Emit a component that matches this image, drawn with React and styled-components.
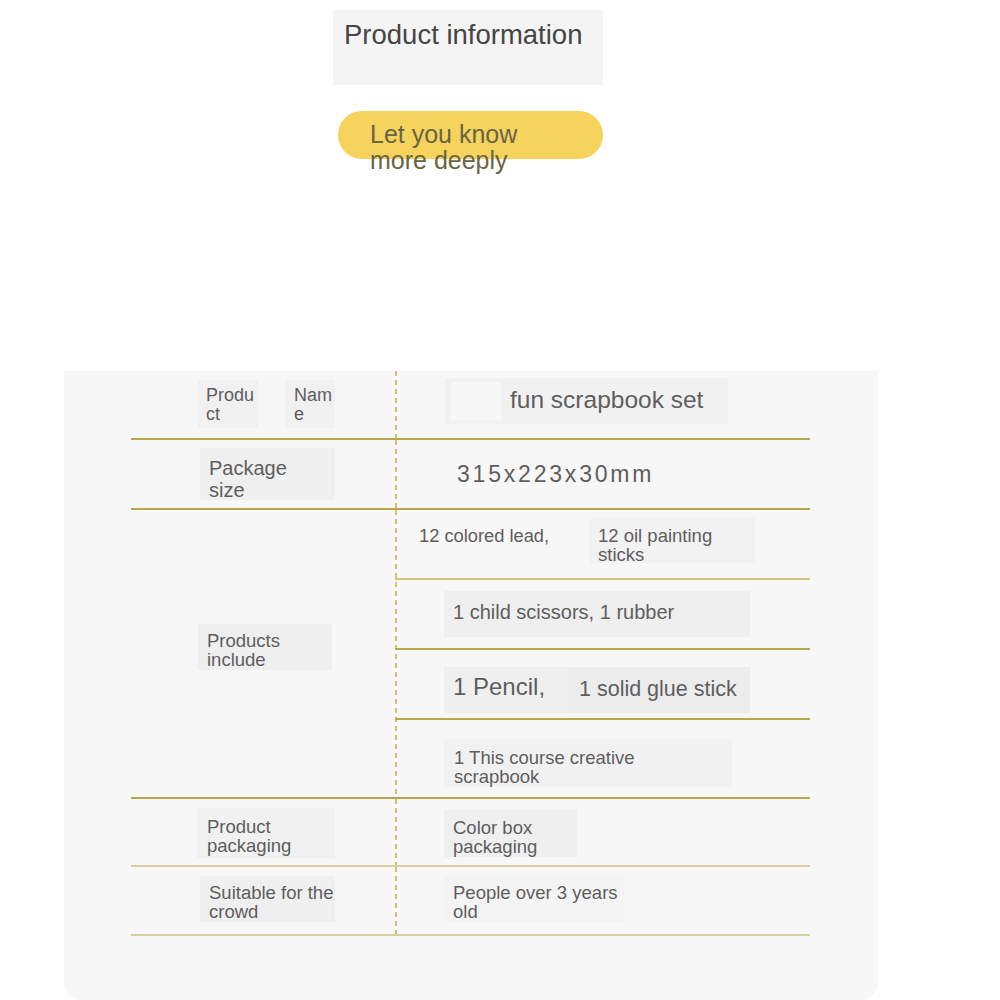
import React from "react";
import styled, { createGlobalStyle } from "styled-components";

const GlobalStyle = createGlobalStyle`
  body {
    margin: 0;
    background: #ffffff;
    font-family: "Liberation Sans", Arial, sans-serif;
    color: #5e5e5e;
  }
`;

const GOLD = "#b9a54a";
const PALE = "#d8cea0";

const Page = styled.div`
  width: 1000px;
  height: 1000px;
  overflow: hidden;
  padding-top: 10px;
  box-sizing: border-box;
`;

const Header = styled.div`
  margin-left: 333px;
  width: 270px;
`;

const TitleBox = styled.div`
  height: 75px;
  box-sizing: border-box;
  background: #f4f4f4;
  padding: 9px 0 0 11px;
  font-size: 27.5px;
  line-height: 32px;
  color: #454545;
`;

const Pill = styled.div`
  margin: 26px 0 0 5px;
  width: 265px;
  height: 48px;
  box-sizing: border-box;
  border-radius: 24px;
  background: #f5d35c;
  padding: 10px 0 0 32px;
  font-size: 25px;
  line-height: 26px;
  color: #6a6446;
`;

const Card = styled.div`
  margin: 212px 0 0 64px;
  width: 814px;
  height: 629px;
  background: #f7f7f7;
  border-radius: 0 0 18px 18px;
  padding-left: 67px;
  box-sizing: border-box;
`;

const Table = styled.div`
  width: 679px;
`;

const Row = styled.div`
  display: grid;
  grid-template-columns: 264px 415px;
  height: ${(p) => p.$h}px;
  border-bottom: 2px solid ${(p) => (p.$pale ? PALE : GOLD)};
`;

const LeftCell = styled.div`
  display: flex;
  align-items: flex-start;
`;

// dashed divider between the two columns
const RightCell = styled.div`
  display: flex;
  flex-direction: ${(p) => (p.$stack ? "column" : "row")};
  align-items: flex-start;
  background-image: linear-gradient(to bottom, #cfc374 55%, transparent 55%);
  background-size: 2px 9px;
  background-repeat: repeat-y;
  background-position: -0.5px 0;
`;

const SubRow = styled.div`
  display: flex;
  align-items: flex-start;
  width: 100%;
  height: ${(p) => p.$h}px;
  flex-shrink: 0;
  border-bottom: ${(p) => (p.$line ? `${p.$line}px solid ${p.$color || GOLD}` : "none")};
`;

const Chip = styled.div`
  display: flex;
  align-items: flex-start;
  flex-shrink: 0;
  background: ${(p) => p.$bg || "#efefef"};
  margin-left: ${(p) => p.$ml || 0}px;
  margin-top: ${(p) => p.$mt || 0}px;
  width: ${(p) => p.$w}px;
  height: ${(p) => p.$h}px;
  box-sizing: border-box;
  padding-left: ${(p) => p.$pl || 0}px;
  padding-top: ${(p) => p.$pt || 0}px;
  font-size: ${(p) => p.$fs || 18.5}px;
  line-height: ${(p) => p.$lh || 19}px;
  color: #5e5e5e;
`;

const Plain = styled.div`
  flex-shrink: 0;
  margin-left: ${(p) => p.$ml || 0}px;
  margin-top: ${(p) => p.$mt || 0}px;
  width: ${(p) => (p.$w ? `${p.$w}px` : "auto")};
  font-size: ${(p) => p.$fs || 18.5}px;
  line-height: ${(p) => p.$lh || 20}px;
  letter-spacing: ${(p) => p.$ls || 0}px;
  color: #5e5e5e;
  white-space: nowrap;
`;

const Blank = styled.div`
  flex-shrink: 0;
  margin: 4px 9px 0 6px;
  width: 50px;
  height: 38px;
  background: #f7f7f7;
`;

export default function App() {
  return (
    <Page>
      <GlobalStyle />
      <Header>
        <TitleBox>Product information</TitleBox>
        <Pill>
          Let you know
          <br />
          more deeply
        </Pill>
      </Header>

      <Card>
        <Table>
          <Row $h={67}>
            <LeftCell>
              <Chip $ml={67} $mt={9} $w={60} $h={48} $pl={8} $pt={6} $fs={18} $bg="#f1f1f1">
                Produ
                <br />
                ct
              </Chip>
              <Chip $ml={27} $mt={9} $w={50} $h={48} $pl={9} $pt={6} $fs={18} $bg="#f1f1f1">
                Nam
                <br />e
              </Chip>
            </LeftCell>
            <RightCell>
              <Chip $ml={50} $mt={7} $w={283} $h={46} $bg="#f1f1f1" $fs={24.5} $lh={28}>
                <Blank />
                <Plain $mt={8} $fs={24.5} $lh={28}>
                  fun scrapbook set
                </Plain>
              </Chip>
            </RightCell>
          </Row>

          <Row $h={68}>
            <LeftCell>
              <Chip $ml={69} $mt={8} $w={135} $h={52} $pl={9} $pt={9} $fs={20} $lh={22}>
                Package
                <br />
                size
              </Chip>
            </LeftCell>
            <RightCell>
              <Plain $ml={62} $mt={20} $fs={23} $lh={28} $ls={2.8}>
                315x223x30mm
              </Plain>
            </RightCell>
          </Row>

          <Row $h={287}>
            <LeftCell>
              <Chip $ml={67} $mt={114} $w={134} $h={46} $pl={9} $pt={7}>
                Products
                <br />
                include
              </Chip>
            </LeftCell>
            <RightCell $stack>
              <SubRow $h={68} $line={2} $color="#d3c683">
                <Plain $ml={24} $mt={16} $w={171} $fs={18.3}>
                  12 colored lead,
                </Plain>
                <Chip $mt={8} $w={165} $h={45} $pl={8} $pt={8} $bg="#f2f2f2">
                  12 oil painting
                  <br />
                  sticks
                </Chip>
              </SubRow>
              <SubRow $h={68} $line={2}>
                <Chip $ml={49} $mt={11} $w={306} $h={46} $pl={9} $pt={10} $fs={20} $lh={22}>
                  1 child scissors, 1 rubber
                </Chip>
              </SubRow>
              <SubRow $h={68} $line={2}>
                <Chip $ml={49} $mt={17} $w={306} $h={46} $pl={9} $pt={6} $fs={24} $lh={28}>
                  <Plain $w={115} $fs={24} $lh={28}>
                    1 Pencil,
                  </Plain>
                  <Chip $mt={-6} $w={182} $h={46} $pl={11} $pt={10} $fs={21.5} $lh={24} $bg="#ececec">
                    1 solid glue stick
                  </Chip>
                </Chip>
              </SubRow>
              <SubRow $h={78}>
                <Chip $ml={49} $mt={19} $w={288} $h={48} $pl={10} $pt={9} $bg="#f1f1f1">
                  1 This course creative
                  <br />
                  scrapbook
                </Chip>
              </SubRow>
            </RightCell>
          </Row>

          <Row $h={66} $pale>
            <LeftCell>
              <Chip $ml={66} $mt={9} $w={138} $h={50} $pl={10} $pt={9} $bg="#f1f1f1">
                Product
                <br />
                packaging
              </Chip>
            </LeftCell>
            <RightCell>
              <Chip $ml={49} $mt={11} $w={133} $h={47} $pl={9} $pt={8}>
                Color box
                <br />
                packaging
              </Chip>
            </RightCell>
          </Row>

          <Row $h={67} $pale>
            <LeftCell>
              <Chip $ml={69} $mt={9} $w={135} $h={46} $pl={9} $pt={7}>
                Suitable for the
                <br />
                crowd
              </Chip>
            </LeftCell>
            <RightCell>
              <Chip $ml={49} $mt={9} $w={180} $h={46} $pl={9} $pt={7} $bg="#f4f4f4">
                People over 3 years
                <br />
                old
              </Chip>
            </RightCell>
          </Row>
        </Table>
      </Card>
    </Page>
  );
}
